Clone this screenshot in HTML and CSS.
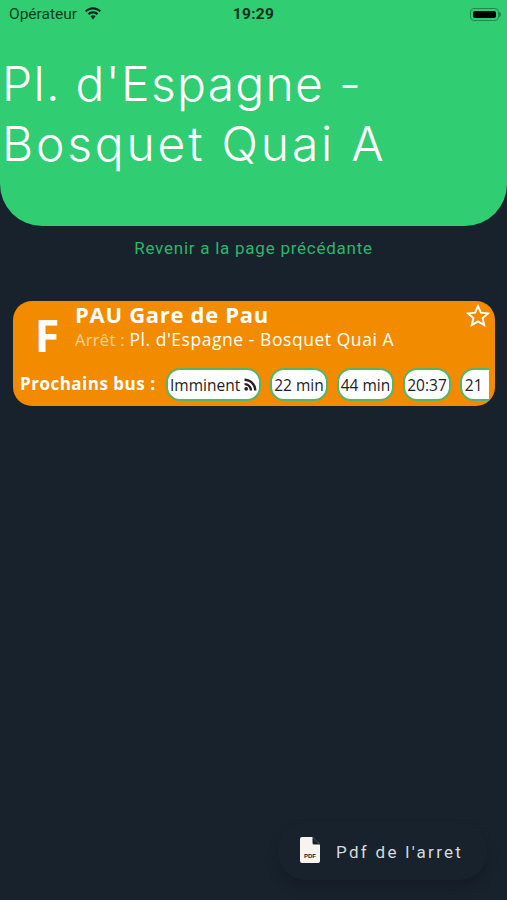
FILE: index.html
```html
<!DOCTYPE html>
<html lang="fr">
<head>
<meta charset="utf-8">
<title>Pl. d'Espagne - Bosquet Quai A</title>
<link rel="stylesheet" href="styles.css">
</head>
<body>
<header class="hero">
  <div class="status">
    <div class="status-left">
      <span>Opérateur</span>
      <svg class="wifi" viewBox="0 0 18 13" aria-hidden="true"><path d="M9 2.600c2.500 0 4.800 1 6.500 2.600l1.500-1.600C14.900 1.500 12.100.2 9 .2S3.100 1.500 1 3.600l1.500 1.600C4.200 3.600 6.500 2.600 9 2.600z"/><path d="M9 6.500c1.500 0 2.800.6 3.800 1.500l1.500-1.600C12.900 5.100 11 4.300 9 4.300s-3.900.8-5.300 2.100l1.500 1.600c1-.9 2.300-1.500 3.800-1.500z"/><path d="M9 8.300c-1 0-1.800.4-2.500 1L9 12.600l2.500-3.300c-.7-.6-1.500-1-2.500-1z"/></svg>
    </div>
    <div class="status-time">19:29</div>
    <div class="status-right">
      <span class="battery"><span class="battery-fill"></span></span><span class="battery-cap"></span>
    </div>
  </div>
  <h1 class="title"><span class="title-first">Pl. d'Espagne -</span><br>Bosquet Quai A</h1>
</header>

<a class="back">Revenir a la page précédante</a>

<section class="card">
  <div class="card-top">
    <div class="line-letter">F</div>
    <div class="card-info">
      <div class="direction">PAU Gare de Pau</div>
      <div class="stop"><span class="stop-label">Arrêt : </span>Pl. d'Espagne - Bosquet Quai A</div>
    </div>
    <svg class="star" viewBox="0 0 24 24" aria-hidden="true"><path d="M12 2.200l2.900 6.500 7.100.7-5.400 4.700 1.600 7-6.200-3.700-6.200 3.700 1.600-7L2 9.400l7.100-.7z"/></svg>
  </div>
  <div class="card-bottom">
    <div class="next-label">Prochains bus :</div>
    <div class="pills">
      <div class="pill">Imminent<svg class="rss" viewBox="0 0 12 12" aria-hidden="true"><circle cx="2" cy="10" r="1.700"/><path d="M.5 4.500v2.200c2.700 0 4.800 2.100 4.800 4.800h2.200c0-3.900-3.100-7-7-7z"/><path d="M.5.500v2.200c4.900 0 8.800 3.900 8.800 8.800h2.200C11.500 5.400 6.600.5.500.5z"/></svg></div>
      <div class="pill">22 min</div>
      <div class="pill">44 min</div>
      <div class="pill">20:37</div>
      <div class="pill pill-cut">21</div>
    </div>
  </div>
</section>

<button class="fab">
  <svg class="pdf" viewBox="0 0 20 26" aria-hidden="true"><path class="pdf-page" d="M2 0h10.500L20 7.500V24a2 2 0 0 1-2 2H2a2 2 0 0 1-2-2V2a2 2 0 0 1 2-2z"/><path class="pdf-fold" d="M12.500 0L20 7.500h-6a1.500 1.500 0 0 1-1.500-1.500z"/><text class="pdf-text" x="10" y="20.500" text-anchor="middle">PDF</text></svg>
  <span>Pdf de l'arret</span>
</button>
</body>
</html>
```
FILE: styles.css
```css
* { box-sizing: border-box; }
html, body { height: 100%; }
body {
  margin: 0;
  background: #18222d;
  font-family: "Inter", "Liberation Sans", sans-serif;
  position: relative;
  overflow: hidden;
}
.hero {
  height: 226px;
  background: #30cd72;
  border-radius: 0 0 42px 42px;
  padding-top: 4px;
}
.status {
  display: flex;
  align-items: center;
  justify-content: space-between;
  height: 20px;
  padding: 0 6px 0 9px;
  color: #0d3d22;
  font-size: 15.500px;
  font-family: "Roboto", sans-serif;
}
.status-left { display: flex; align-items: center; gap: 7px; width: 120px; }
.wifi { width: 18px; height: 13px; fill: #06281a; margin-top: -1px; }
.status-time { font-weight: 700; font-size: 15.500px; color: #0b2f1c; letter-spacing: .3px; margin-left: -3px; }
.status-right { display: flex; align-items: center; justify-content: flex-end; width: 120px; }
.battery {
  width: 29px; height: 13px; padding: 2px;
  border: 1px solid #1f8a50; border-radius: 4px; display: block;
}
.battery-fill { display: block; height: 100%; background: #000; border-radius: 2px; }
.battery-cap { width: 2px; height: 5px; background: #1f8a50; border-radius: 0 2px 2px 0; }
.title {
  margin: 30px 0 0;
  padding-left: 2px;
  font-family: "Inter", sans-serif;
  font-weight: 300;
  font-size: 48px;
  line-height: 60px;
  color: #fff;
  letter-spacing: 2.800px;
}
.title-first { letter-spacing: 1.300px; }
.back {
  display: block;
  margin-top: 12px;
  text-align: center;
  color: #2fb56b;
  font-size: 17px;
  line-height: 20px;
  letter-spacing: .75px;
  font-family: "Roboto", sans-serif;
}
.card {
  margin: 43px 12px 0 13px;
  height: 105px;
  background: #f38b00;
  border-radius: 19px;
  padding: 0 6px 0 6px;
  color: #fff;
  font-family: "Open Sans", sans-serif;
}
.card-top { display: flex; height: 60px; position: relative; }
.line-letter {
  width: 56px;
  text-align: center;
  font-size: 45px;
  font-weight: 700;
  line-height: 68px;
  flex: none;
}
.card-info { flex: 1; }
.direction { font-size: 22px; font-weight: 700; line-height: 26px; letter-spacing: .7px; }
.stop { font-size: 17.500px; line-height: 24px; font-weight: 500; letter-spacing: .55px; }
.stop-label { opacity: .6; font-weight: 400; font-size: 16.500px; letter-spacing: .3px; }
.star { width: 24px; height: 24px; fill: none; stroke: #fff; stroke-width: 1.900; flex: none; margin: 3px -1px 0 0; }
.card-bottom { display: flex; align-items: center; margin-top: 7px; }
.next-label { font-size: 17px; font-weight: 700; white-space: nowrap; width: 147px; flex: none; padding-left: 1px; letter-spacing: .5px; margin-top: -2px; }
.pills { display: flex; gap: 9px; overflow: hidden; width: 323px; }
.pill {
  flex: none;
  height: 33px;
  padding: 0 2px;
  display: flex;
  align-items: center;
  background: #fff;
  border: 2px solid #58b368;
  border-radius: 14px;
  color: #222;
  font-family: "Open Sans", sans-serif;
  font-size: 15.500px;
  white-space: nowrap;
}
.pill-cut { width: 44px; padding-left: 3px; }
.rss { width: 13px; height: 13px; fill: #222; margin-left: 4px; }
.fab {
  position: absolute;
  left: 278px;
  top: 823px;
  width: 209px;
  height: 57px;
  display: flex;
  align-items: center;
  gap: 16px;
  padding: 0 0 0 22px;
  margin: 0;
  border: 0;
  border-radius: 28px;
  background: #18222d;
  box-shadow: 0 7px 12px rgba(10, 16, 22, .3);
  color: #d5dade;
  font-family: "Roboto", sans-serif;
  font-size: 17px;
  letter-spacing: 2.300px;
}
.pdf { width: 20px; height: 26px; flex: none; margin-top: -3px; }
.pdf-page { fill: #f7f4ef; }
.pdf-fold { fill: #18222d; }
.pdf-text { font-family: "Liberation Sans", sans-serif; font-size: 6px; font-weight: 700; fill: #18222d; letter-spacing: 0; }
```
